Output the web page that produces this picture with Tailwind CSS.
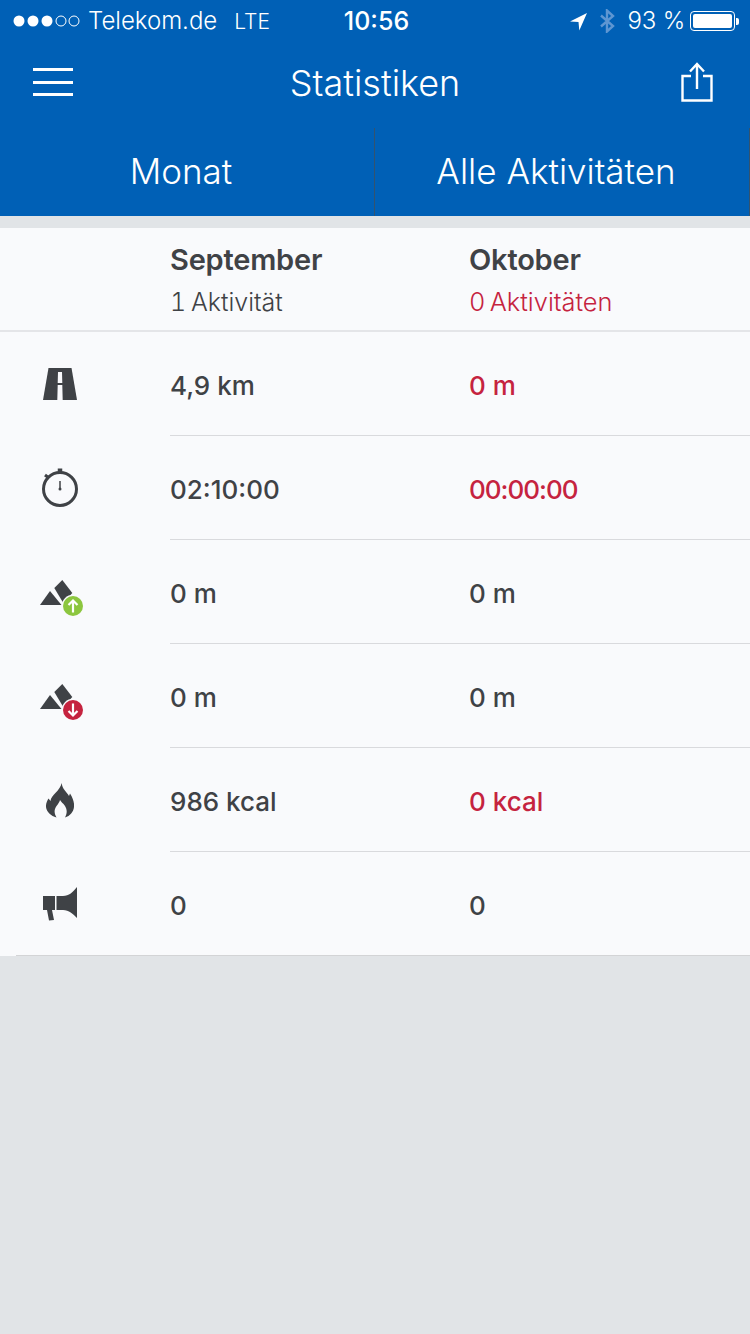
<!DOCTYPE html>
<html lang="de">
<head>
  <meta charset="UTF-8">
  <meta name="viewport" content="width=device-width, initial-scale=1.0">
  <title>Statistiken</title>
  <script src="https://cdn.jsdelivr.net/npm/@tailwindcss/browser@4"></script>
</head>
<body class="w-[750px] h-[1334px] overflow-hidden bg-[#e1e4e7] font-['Inter','Liberation_Sans',sans-serif] text-[#3f4246]">
  <!-- status bar -->
  <div class="h-[40px] bg-[#0060b6] text-white flex items-center pl-[13px] pr-[11px] pt-[2px] text-[24px] leading-none relative">
    <svg class="w-[67px] h-[14px]" viewBox="0 0 67 14">
      <circle cx="6" cy="7" r="5.5" fill="#fff"/>
      <circle cx="20" cy="7" r="5.5" fill="#fff"/>
      <circle cx="34" cy="7" r="5.5" fill="#fff"/>
      <circle cx="48" cy="7" r="5" fill="none" stroke="#fff" stroke-width="1"/>
      <circle cx="61" cy="7" r="5" fill="none" stroke="#fff" stroke-width="1"/>
    </svg>
    <span class="ml-[8px] font-light">Telekom.de</span>
    <span class="ml-[17px] text-[21px] font-light">LTE</span>
    <span class="absolute left-[3px] right-0 text-center text-[25px] font-medium">10:56</span>
    <svg class="ml-auto w-[19px] h-[19px]" viewBox="0 0 19 19"><path d="M18 1 1 9.500l8.500.5.8 8.500z" fill="#fff"/></svg>
    <svg class="ml-[11px] w-[17px] h-[24px]" viewBox="0 0 17 24" fill="none" stroke="#5e96d2" stroke-width="2.4"><path d="M2 6.500 14 17l-6 5.500v-21L14 7 2 17.500"/></svg>
    <span class="ml-[12px] font-light tracking-[-0.2px]">93 %</span>
    <div class="ml-[5px] w-[45px] h-[20px] rounded-[4px] border border-white p-[2px]"><div class="w-full h-full bg-white rounded-[2px]"></div></div>
    <div class="ml-[1px] w-[3px] h-[7px] bg-white rounded-r-[2px]"></div>
  </div>

  <!-- nav bar -->
  <div class="h-[88px] bg-[#0060b6] text-white grid grid-cols-[1fr_auto_1fr] items-center pl-[33px] pr-[37px]">
    <div class="w-[40px] flex flex-col gap-[9.500px] mb-[4px]">
      <div class="h-[3px] bg-white"></div>
      <div class="h-[3px] bg-white"></div>
      <div class="h-[3px] bg-white"></div>
    </div>
    <h1 class="text-[36px] font-light ml-[4px] mb-[2px]">Statistiken</h1>
    <svg class="justify-self-end w-[32px] h-[40px] mb-[5px]" viewBox="0 0 32 40" fill="none" stroke="#fff" stroke-width="2.4">
      <path d="M10 14H1.500v24.500h29V14H22"/>
      <path d="M16 27V2M9 9.500 16 2l7 7.500"/>
    </svg>
  </div>

  <!-- period / activity filters -->
  <div class="h-[88px] bg-[#0060b6] text-white text-[35px] font-light grid grid-cols-2">
    <div class="flex items-center justify-center pr-[12px] pb-[2px] border-r border-[#33536f]">Monat</div>
    <div class="flex items-center justify-center pr-[12px] pb-[2px] border-r border-[#33536f]">Alle Aktivitäten</div>
  </div>

  <!-- stats table -->
  <div class="mt-[12px] bg-[#f9fafc]">
    <div class="h-[104px] pl-[170px] grid grid-cols-[299px_1fr] border-b-2 border-[#e4e5e8] pt-[13px]">
      <div>
        <div class="text-[29px] font-semibold tracking-[-0.2px] leading-[38px]">September</div>
        <div class="text-[25px] font-light tabular-nums [word-spacing:-2px] leading-[30px] mt-[8px]">1 Aktivität</div>
      </div>
      <div>
        <div class="text-[29px] font-semibold tracking-[-0.2px] leading-[38px]">Oktober</div>
        <div class="text-[25.400px] font-light tabular-nums [word-spacing:-2.500px] leading-[30px] mt-[8px] text-[#c5233f]">0 Aktivitäten</div>
      </div>
    </div>

    <div class="flex h-[104px] items-center">
      <div class="w-[170px] pl-[43px] shrink-0">
        <svg class="w-[34px] h-[34px] mb-[1px]" viewBox="0 0 34 34">
          <path d="M5.500 1h23L34 33H0z" fill="#3f4246"/>
          <path d="M15 5h4l.3 11h-4.600zM14.700 18h4.600l.4 15h-5.400z" fill="#f9fafc"/>
        </svg>
      </div>
      <div class="flex-1 h-full flex items-center border-b border-[#d9dadd] text-[26px] font-medium pt-[4px]">
        <div class="w-[299px]">4,9 km</div>
        <div class="text-[#c5233f]">0 m</div>
      </div>
    </div>

    <div class="flex h-[104px] items-center">
      <div class="w-[170px] pl-[41px] shrink-0">
        <svg class="w-[38px] h-[42px]" viewBox="0 0 38 42" fill="none" stroke="#3f4246">
          <circle cx="19" cy="22" r="16.500" stroke-width="3"/>
          <path d="M19 1.500v4" stroke-width="4.500"/>
          <path d="M4 8l4 3" stroke-width="3"/>
          <path d="M19 14v7.500" stroke-width="1.500"/>
          <circle cx="19" cy="22" r="1.500" fill="#3f4246" stroke="none"/>
        </svg>
      </div>
      <div class="flex-1 h-full flex items-center border-b border-[#d9dadd] text-[26px] font-medium pt-[4px]">
        <div class="w-[299px]">02:10:00</div>
        <div class="text-[#c5233f] tracking-[-1px]">00:00:00</div>
      </div>
    </div>

    <div class="flex h-[104px] items-center">
      <div class="w-[170px] pl-[40px] shrink-0">
        <svg class="w-[44px] h-[38px] mt-[14px]" viewBox="0 0 44 38">
          <path d="M0 25 10 11l11.500 14z" fill="#3f4246"/>
          <path d="M14.300 8 22.300 0l10 13-9 10z" fill="#3f4246"/>
          <circle cx="33" cy="26" r="11.200" fill="#f9fafc"/>
          <circle cx="33" cy="26" r="10" fill="#8cc63f"/>
          <path d="M33 32.500V20.500M28.500 25l4.500-4.500 4.500 4.500" fill="none" stroke="#fff" stroke-width="2.200"/>
        </svg>
      </div>
      <div class="flex-1 h-full flex items-center border-b border-[#d9dadd] text-[26px] font-medium pt-[4px]">
        <div class="w-[299px]">0 m</div>
        <div>0 m</div>
      </div>
    </div>

    <div class="flex h-[104px] items-center">
      <div class="w-[170px] pl-[40px] shrink-0">
        <svg class="w-[44px] h-[38px] mt-[14px]" viewBox="0 0 44 38">
          <path d="M0 25 10 11l11.500 14z" fill="#3f4246"/>
          <path d="M14.300 8 22.300 0l10 13-9 10z" fill="#3f4246"/>
          <circle cx="33" cy="26" r="11.200" fill="#f9fafc"/>
          <circle cx="33" cy="26" r="10" fill="#c5233f"/>
          <path d="M33 19.500V31.500M28.500 27l4.500 4.500 4.500-4.500" fill="none" stroke="#fff" stroke-width="2.200"/>
        </svg>
      </div>
      <div class="flex-1 h-full flex items-center border-b border-[#d9dadd] text-[26px] font-medium pt-[4px]">
        <div class="w-[299px]">0 m</div>
        <div>0 m</div>
      </div>
    </div>

    <div class="flex h-[104px] items-center">
      <div class="w-[170px] pl-[46px] shrink-0">
        <svg class="w-[28px] h-[35px]" viewBox="0 0 28 35">
          <path d="M15.700 0C16 6 21 9 23 13l1-2.500C27 15 28.500 20 28 24c-.5 5-4 9-9 10.500 2-3.500 2.500-7.500 0-11.500-2-3-4-4-5-6-.5 3-3.500 5-5 9-1 3 0 6 1.500 8.500C5 33 .5 29 0 24c-.3-3 1-6 2.500-8.500L4.500 18C5 12 14 8 15.700 0z" fill="#3f4246"/>
        </svg>
      </div>
      <div class="flex-1 h-full flex items-center border-b border-[#d9dadd] text-[26px] font-medium pt-[4px]">
        <div class="w-[299px]">986 kcal</div>
        <div class="text-[#c5233f]">0 kcal</div>
      </div>
    </div>

    <div class="h-[104px]">
      <div class="flex h-full items-center ml-[16px] border-b border-[#d3d4d6]">
        <div class="w-[154px] pl-[27px] shrink-0">
          <svg class="w-[34px] h-[34px]" viewBox="0 0 34 34">
            <path d="M0 9h12v14H9l2 10-5 .5L4 23H0z" fill="#3f4246"/>
            <path d="M13.500 9H20C26 9 30 5 34 0v31c-4-4-8-8-14-8h-6.500z" fill="#3f4246"/>
          </svg>
        </div>
        <div class="flex-1 h-full flex items-center text-[26px] font-medium pt-[4px]">
          <div class="w-[299px]">0</div>
          <div>0</div>
        </div>
      </div>
    </div>
  </div>
</body>
</html>
